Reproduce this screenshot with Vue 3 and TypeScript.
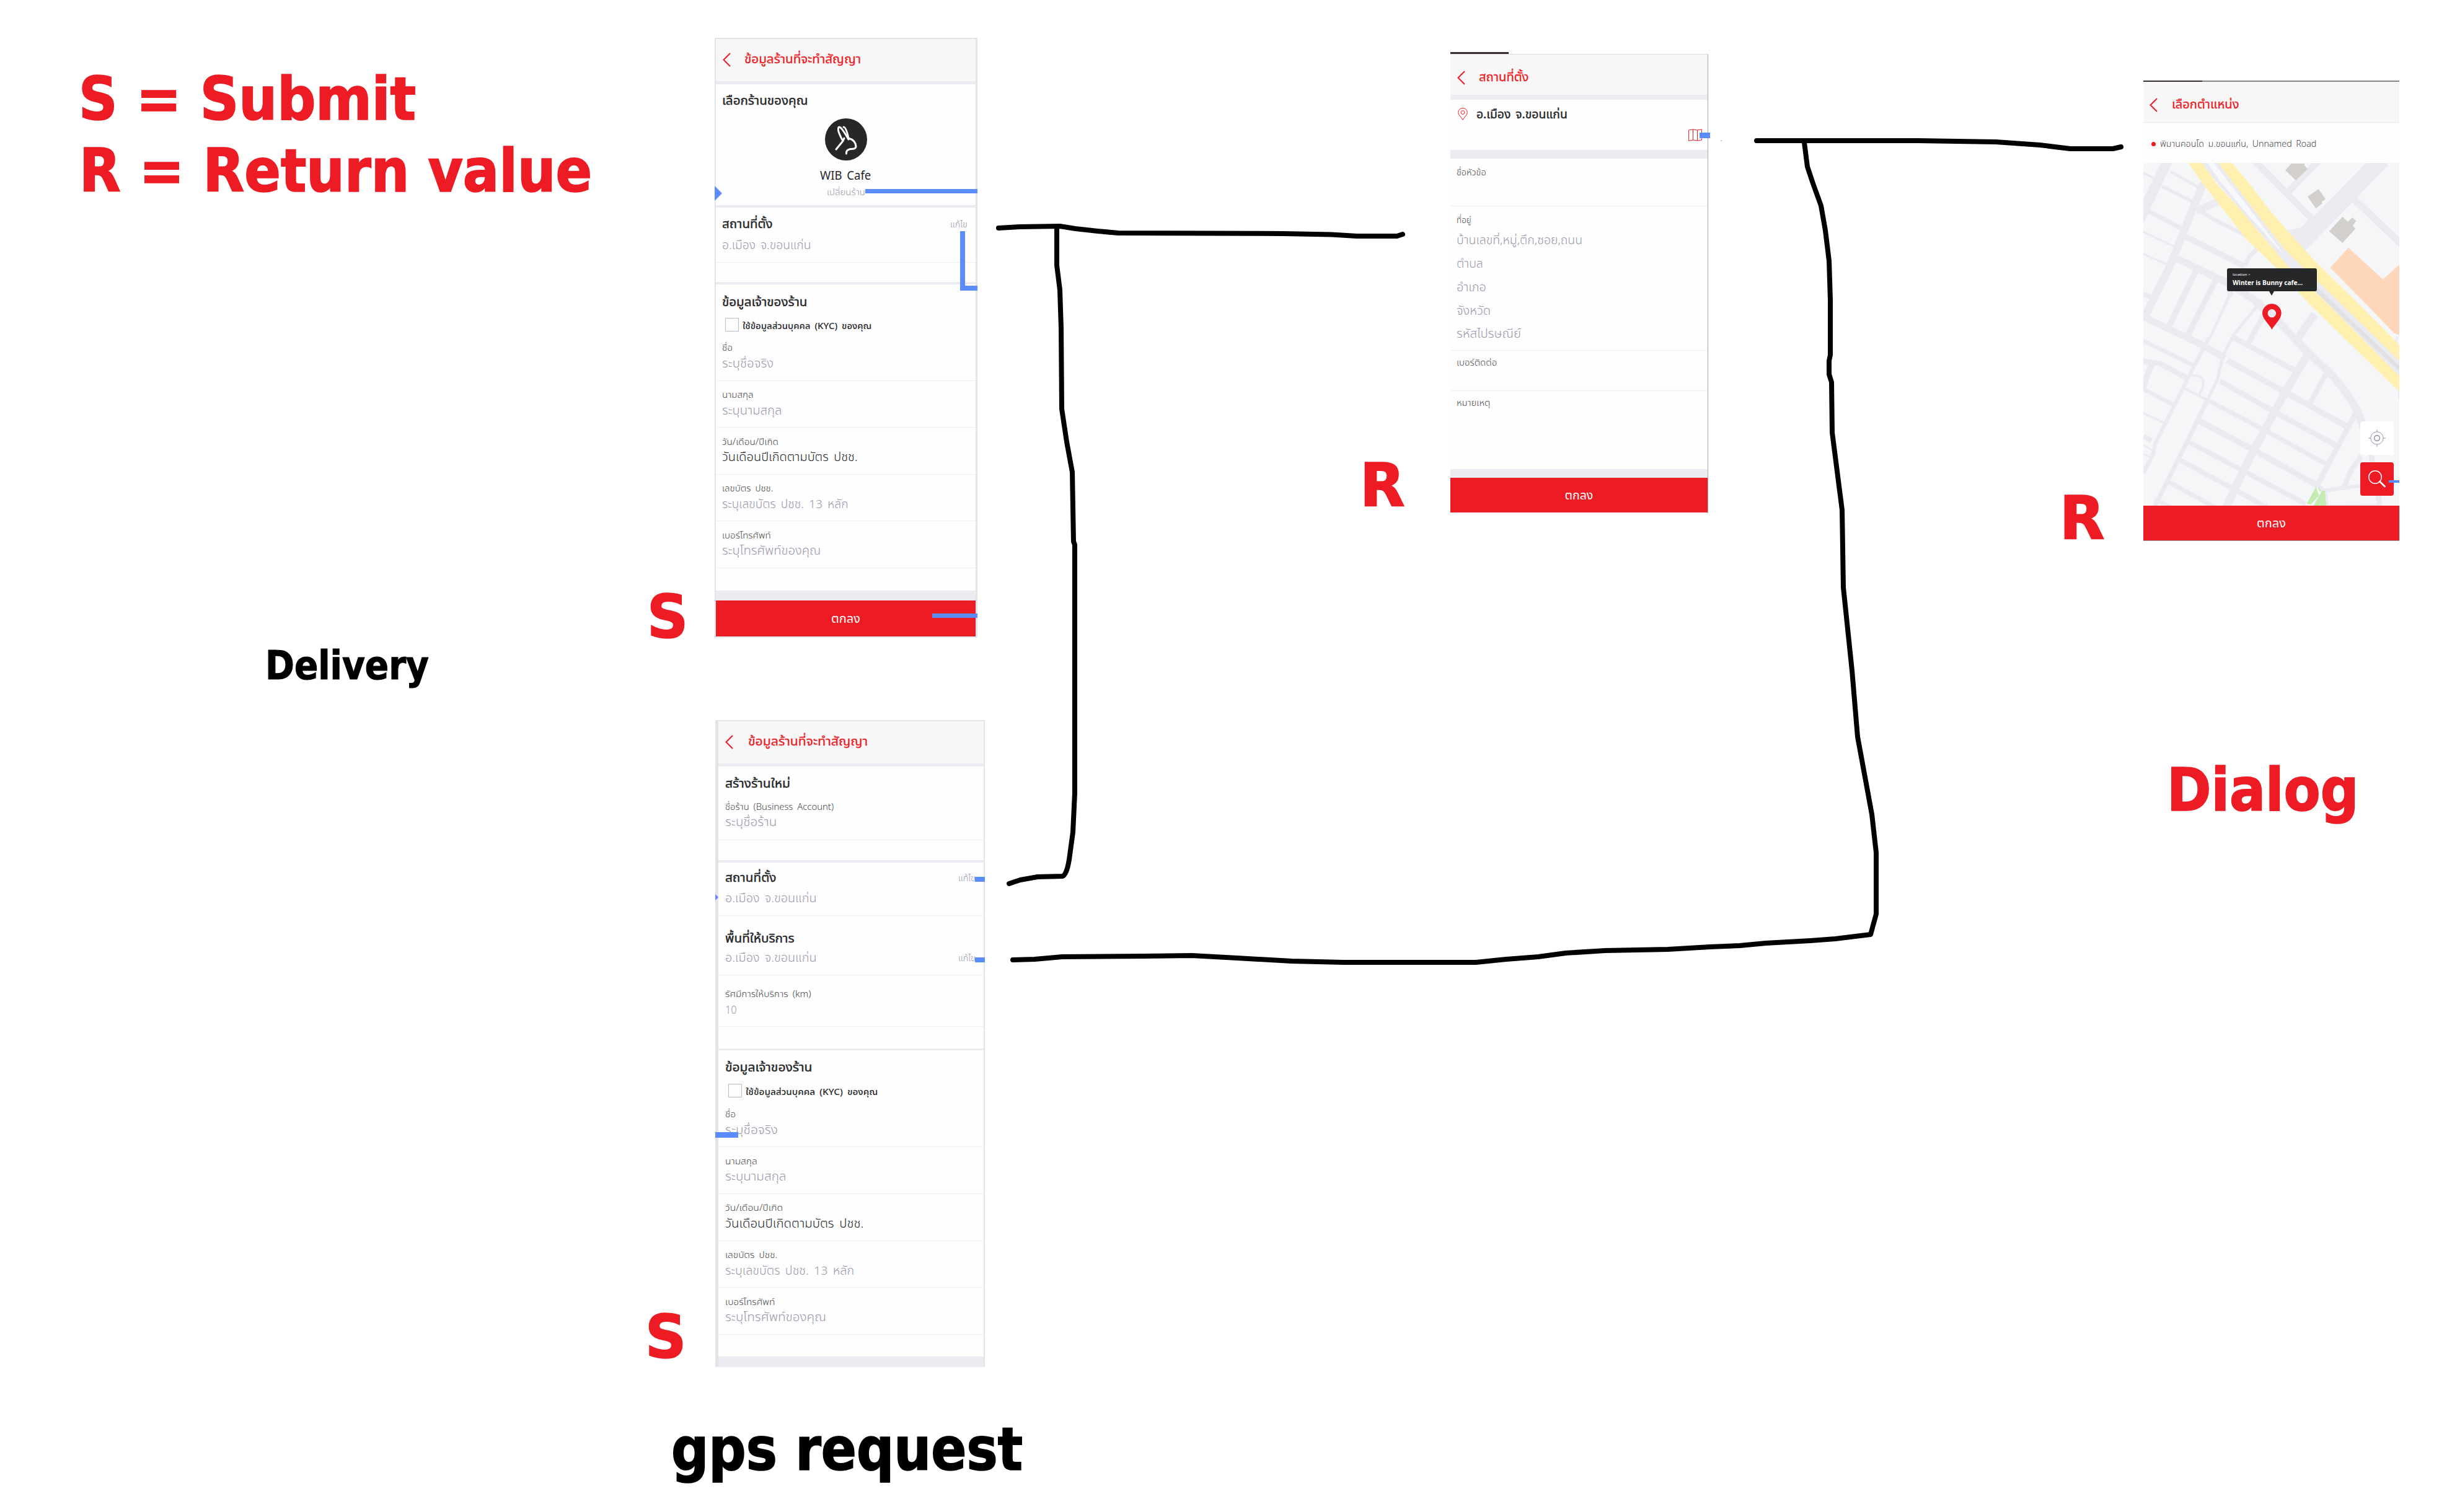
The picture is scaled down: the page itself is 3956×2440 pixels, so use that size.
<script setup lang="ts">
import type { Directive } from 'vue'

type Kind = 'title' | 'label' | 'value' | 'dark' | 'rule' | 'band' | 'check' | 'logo' | 'name' | 'sub' | 'place' | 'mapicon' | 'button'

interface Row {
  kind: Kind
  gap?: number
  text?: string
  w?: number
  h?: number
  edit?: boolean
}

interface Screen {
  id: string
  title: string
  titleWidth: number
  rows: Row[]
}

// Stretches a single line of text to the given width in pixels.
const vFit: Directive<HTMLElement, number | undefined> = {
  mounted(el, binding) {
    const width = el.offsetWidth
    if (binding.value && width) {
      el.style.transform = `scaleX(${binding.value / width})`
    }
  },
}

const ownerFields = (k: number): Row[] => {
  const fields: [string, number, string, number, boolean?][] = [
    ['ชื่อ', 17, 'ระบุชื่อจริง', 83],
    ['นามสกุล', 51, 'ระบุนามสกุล', 97],
    ['วัน/เดือน/ปีเกิด', 91, 'วันเดือนปีเกิดตามบัตร ปชช.', 219, true],
    ['เลขบัตร ปชช.', 82, 'ระบุเลขบัตร ปชช. 13 หลัก', 204],
    ['เบอร์โทรศัพท์', 79, 'ระบุโทรศัพท์ของคุณ', 159],
  ]
  return fields.flatMap(([label, lw, value, vw, dark]): Row[] => [
    { kind: 'label', gap: 9.4, text: label, w: lw * k },
    { kind: dark ? 'dark' : 'value', gap: 1.6, text: value, w: vw * k },
    { kind: 'rule', gap: 15.6 },
  ])
}

const screens: Screen[] = [
  {
    id: 'select-shop',
    title: 'ข้อมูลร้านที่จะทำสัญญา',
    titleWidth: 188,
    rows: [
      { kind: 'title', gap: 14, text: 'เลือกร้านของคุณ', w: 138 },
      { kind: 'logo', gap: 17 },
      { kind: 'name', gap: 12, text: 'WIB Cafe', w: 82 },
      { kind: 'sub', gap: 2, text: 'เปลี่ยนร้าน', w: 62 },
      { kind: 'band', gap: 10, h: 4 },
      { kind: 'title', gap: 14, text: 'สถานที่ตั้ง', w: 82, edit: true },
      { kind: 'value', gap: 9.6, text: 'อ.เมือง จ.ขอนแก่น', w: 143 },
      { kind: 'rule', gap: 16.4 },
      { kind: 'band', gap: 31, h: 4 },
      { kind: 'title', gap: 15.6, text: 'ข้อมูลเจ้าของร้าน', w: 138 },
      { kind: 'check', gap: 14.4, text: 'ใช้ข้อมูลส่วนบุคคล (KYC) ของคุณ', w: 208 },
      { kind: 'label', gap: 11.4, text: 'ชื่อ', w: 17 },
      ...ownerFields(1).slice(1),
      { kind: 'band', gap: 36, h: 16 },
      { kind: 'button', text: 'ตกลง', w: 47 },
    ],
  },
  {
    id: 'new-shop',
    title: 'ข้อมูลร้านที่จะทำสัญญา',
    titleWidth: 193,
    rows: [
      { kind: 'title', gap: 15, text: 'สร้างร้านใหม่', w: 105 },
      { kind: 'label', gap: 13, text: 'ชื่อร้าน (Business Account)', w: 175 },
      { kind: 'value', gap: 1, text: 'ระบุชื่อร้าน', w: 83 },
      { kind: 'rule', gap: 17 },
      { kind: 'band', gap: 32, h: 4 },
      { kind: 'title', gap: 12, text: 'สถานที่ตั้ง', w: 83, edit: true },
      { kind: 'value', gap: 8.6, text: 'อ.เมือง จ.ขอนแก่น', w: 147 },
      { kind: 'rule', gap: 16.4 },
      { kind: 'title', gap: 24, text: 'พื้นที่ให้บริการ', w: 112 },
      { kind: 'value', gap: 6.6, text: 'อ.เมือง จ.ขอนแก่น', w: 147, edit: true },
      { kind: 'rule', gap: 16.4 },
      { kind: 'label', gap: 17.4, text: 'รัศมีการให้บริการ (km)', w: 139 },
      { kind: 'value', gap: 1.6, text: '10', w: 19 },
      { kind: 'rule', gap: 15.4 },
      { kind: 'band', gap: 34.6, h: 3 },
      { kind: 'title', gap: 15, text: 'ข้อมูลเจ้าของร้าน', w: 141 },
      { kind: 'check', gap: 14.7, text: 'ใช้ข้อมูลส่วนบุคคล (KYC) ของคุณ', w: 213 },
      { kind: 'label', gap: 12.6, text: 'ชื่อ', w: 17 },
      ...ownerFields(1.022).slice(1),
      { kind: 'band', gap: 35, h: 17 },
    ],
  },
  {
    id: 'address',
    title: 'สถานที่ตั้ง',
    titleWidth: 81,
    rows: [
      { kind: 'place', gap: 11, text: 'อ.เมือง จ.ขอนแก่น', w: 147 },
      { kind: 'mapicon', gap: 12 },
      { kind: 'band', gap: 13, h: 14 },
      { kind: 'label', gap: 9.4, text: 'ชื่อหัวข้อ', w: 48 },
      { kind: 'rule', gap: 42.6 },
      { kind: 'label', gap: 9, text: 'ที่อยู่', w: 24 },
      { kind: 'value', gap: 8.6, text: 'บ้านเลขที่,หมู่,ตึก,ซอย,ถนน', w: 203 },
      { kind: 'value', gap: 14, text: 'ตำบล', w: 43 },
      { kind: 'value', gap: 14, text: 'อำเภอ', w: 48 },
      { kind: 'value', gap: 14, text: 'จังหวัด', w: 55 },
      { kind: 'value', gap: 13.7, text: 'รหัสไปรษณีย์', w: 104 },
      { kind: 'rule', gap: 14.7 },
      { kind: 'label', gap: 6.4, text: 'เบอร์ติดต่อ', w: 65 },
      { kind: 'rule', gap: 33.6 },
      { kind: 'label', gap: 6.4, text: 'หมายเหตุ', w: 54 },
      { kind: 'band', gap: 96, h: 14 },
      { kind: 'button', text: 'ตกลง', w: 46 },
    ],
  },
]

const notes = [
  { id: 'n1', x: 127, y: 193, text: 'S = Submit', w: 544, size: 96, red: true },
  { id: 'n2', x: 128, y: 309, text: 'R = Return value', w: 827, size: 96, red: true },
  { id: 'n3', x: 1044, y: 1029, text: 'S', w: 66, size: 96, red: true },
  { id: 'n4', x: 1041, y: 2191, text: 'S', w: 66, size: 96, red: true },
  { id: 'n5', x: 2194, y: 817, text: 'R', w: 73, size: 96, red: true },
  { id: 'n6', x: 3323, y: 870, text: 'R', w: 73, size: 96, red: true },
  { id: 'n7', x: 3496, y: 1308, text: 'Dialog', w: 309, size: 96, red: true },
  { id: 'n8', x: 428, y: 1096, text: 'Delivery', w: 264, size: 64, red: false },
  { id: 'n9', x: 1083, y: 2372, text: 'gps request', w: 567, size: 96, red: false },
]

// Streets of the map: [stroke width, path].
const roads: [number, string][] = [
  [50, 'M170 450L30 745'],
  [38, 'M345 555L290 690L175 975L60 1205'],
  [10, 'M54 508L105 533'],
  [14, 'M185 500L325 580'],
  [15, 'M145 573L300 650'],
  [36, 'M310 690L430 640'],
  [18, 'M330 692L400 735L560 815'],
  [22, 'M80 692L235 775'],
  [10, 'M54 792L210 866'],
  [10, 'M54 900L180 955'],
  [28, 'M250 812L545 960'],
  [34, 'M205 915L460 1040L620 1140'],
  [20, 'M610 872C570 900 560 920 545 960'],
  [22, 'M50 1092L95 1112'],
  [28, 'M312 975L180 1245'],
  [28, 'M402 1030L268 1295'],
  [12, 'M485 1070L375 1310'],
  [26, 'M480 1060L472 1105'],
  [15, 'M606 1150L488 1295L438 1395L412 1510L365 1605'],
  [32, 'M54 1203L350 1345L450 1405'],
  [20, 'M54 1320L292 1437'],
  [26, 'M54 1418L135 1430L265 1500'],
  [28, 'M85 1420L92 1440L50 1550'],
  [20, 'M54 1553L200 1630'],
  [10, 'M54 1670L150 1715'],
  [24, 'M54 1783L94 1802'],
  [8, 'M54 1825L105 1855M54 1868L85 1883'],
  [19, 'M372 1305L350 1345L265 1510L190 1660L110 1820L105 1860L54 1960'],
  [12, 'M275 1492C350 1475 360 1520 325 1580'],
  [12, 'M255 1550L370 1610'],
  [26, 'M485 1302L790 1465'],
  [28, 'M460 1415L740 1568L1040 1735'],
  [26, 'M425 1515L700 1670L985 1825'],
  [22, 'M375 1612L640 1752L935 1915'],
  [28, 'M320 1705L590 1850L900 2022'],
  [24, 'M270 1808L530 1945L840 2110'],
  [24, 'M222 1892L490 2037L650 2125'],
  [22, 'M170 2000L400 2125'],
  [22, 'M110 2085L180 2125'],
  [38, 'M850 1385L740 1570L640 1755L560 1905L455 2125'],
  [22, 'M365 1605L270 1800L105 2130'],
  [38, 'M600 1130L720 1240L850 1375L945 1465C1030 1550 1090 1640 1120 1740'],
  [26, 'M1120 1740L1155 1860L1200 2125'],
  [26, 'M1085 1665L895 2020'],
  [26, 'M640 1190L560 1335'],
  [38, 'M885 1190L800 1310'],
  [24, 'M945 1465L860 1625'],
  [24, 'M1110 1880C1060 1930 1045 1980 1022 2040'],
  [18, 'M895 2020L930 2045L1130 2018'],
  [8, 'M940 2050L945 2118L1190 2114'],
  [10, 'M1285 1300L1275 1325M1290 1565L1293 1600'],
  [32, 'M595 450L870 730'],
  [32, 'M900 450L750 605'],
  [85, 'M1210 440L810 850'],
  [34, 'M1065 625L1300 850'],
]
</script>

<template>
  <main class="board">
    <p
      v-for="n in notes"
      :key="n.id"
      class="note"
      :class="{ red: n.red }"
      :style="{ left: n.x + 'px', top: n.y + 'px', fontSize: n.size + 'px' }"
    >
      <span v-fit="n.w" class="t">{{ n.text }}</span>
    </p>

    <section v-for="s in screens" :key="s.id" class="screen" :class="s.id">
      <header class="bar">
        <svg class="back" viewBox="0 0 13 23"><path d="M12 1L1.5 11.5L12 22" /></svg>
        <span v-fit="s.titleWidth" class="t">{{ s.title }}</span>
      </header>
      <div
        v-for="(r, i) in s.rows"
        :key="i"
        class="row"
        :class="r.kind"
        :style="{ marginTop: (r.gap ?? 0) + 'px', height: r.h ? r.h + 'px' : undefined }"
      >
        <svg v-if="r.kind === 'logo'" viewBox="0 0 68 68">
          <circle cx="34" cy="34" r="34" fill="#262729" />
          <path
            d="M18 50L29 36.500Q19 19 22 14.500Q25 11 38 34M29 36.500L31 32M30 14Q34 14 38 32Q49 35 50 45Q50 50 41 49.500Q33.500 51 34.500 57"
            fill="none"
            stroke="#fff"
            stroke-width="3"
            stroke-linecap="round"
            stroke-linejoin="round"
          />
        </svg>
        <svg v-else-if="r.kind === 'mapicon'" viewBox="0 0 22 20">
          <path d="M.6 2L7.500.8L14.500 2L21.400.8V18L14.500 19L7.500 18L.6 19.300ZM7.500.8V18M14.500 2V19" />
        </svg>
        <template v-else>
          <svg v-if="r.kind === 'place'" class="pin" viewBox="0 0 16 20">
            <path d="M8 19.300C6 15.500.7 11.500.7 7.500a7.300 7 0 0 1 14.600 0C15.300 11.500 10 15.500 8 19.300Z" />
            <circle cx="8" cy="7.500" r="2.900" />
          </svg>
          <i v-if="r.kind === 'check'" class="box"></i>
          <span v-if="r.text" v-fit="r.w" class="t">{{ r.text }}</span>
          <span v-if="r.edit" class="edit"><span v-fit="28" class="t">แก้ไข</span></span>
        </template>
      </div>
      <template v-if="s.id === 'select-shop'">
        <i class="mark a1"></i><i class="mark a2"></i><i class="mark a3"></i><i class="mark a4"></i><i class="tip"></i>
      </template>
      <template v-else-if="s.id === 'new-shop'">
        <i class="mark b1"></i><i class="mark b2"></i><i class="mark b3"></i><i class="tip"></i>
      </template>
      <template v-else>
        <i class="mark c1"></i><i class="progress"></i>
      </template>
    </section>

    <section class="screen picker">
      <header class="bar">
        <svg class="back" viewBox="0 0 13 23"><path d="M12 1L1.5 11.5L12 22" /></svg>
        <span v-fit="109" class="t">เลือกตำแหน่ง</span>
      </header>
      <div class="addr">
        <i class="dot"></i>
        <span v-fit="252" class="t">พิมานคอนโด ม.ขอนแก่น, Unnamed Road</span>
      </div>
      <div class="map">
        <svg class="streets" viewBox="54 459 1239 1659" preserveAspectRatio="none">
          <rect x="54" y="459" width="1239" height="1659" fill="#f4f6f8" />
          <g fill="none" stroke="#ebeaf1" stroke-linejoin="round">
            <path v-for="([w, d], i) in roads" :key="i" :d="d" :stroke-width="w" />
          </g>
          <path fill="#ebeaf1" d="M750 787L815 770Q850 750 860 700L930 760L830 890Z" />
          <path fill="#ebeaf1" d="M330 459H430L750 880L1010 1130L1293 1410V1500L945 1140L765 970Z" />
          <path fill="#f7f8fa" d="M365 459H395L560 670L742 912L560 710L420 540Z" />
          <path fill="none" stroke="#e1e1e3" stroke-width="20" d="M885 1065L1293 1455" />
          <path fill="#fff0b0" d="M272 459L350 570L465 715L545 820L700 970L870 1155L1293 1565V1490L945 1140L765 970L640 825L520 680L410 560L338 459Z" />
          <path fill="#fff0b0" d="M418 459L500 570L600 700L740 880L830 970L1010 1140L1293 1417V1340L1095 1140L890 940L750 785L660 680L560 550L483 459Z" />
          <path fill="#d3cfcc" d="M770 462H835L833 470L849 488L792 543L741 494ZM902 586L936 634L917 647L921 655L889 679L849 622ZM1018 720L1045 744L1066 723L1084 740L1067 762L1080 777L1018 846L953 790Z" />
          <path fill="#fed6b9" d="M1046 869L1214 1022L1293 951V1293L1265 1280L1130 1140L959 966Z" />
          <path fill="#c3ebb2" d="M890 2027L898 2055L905 2068L865 2112L845 2108ZM899 2027L914 2044L908 2052ZM920 2044L933 2047L940 2118H878Z" />
          <path fill="#ed1c24" fill-rule="evenodd" d="M676 1266C665 1240 630 1215 630 1186a46 45 0 0 1 92 0C722 1215 690 1240 676 1266ZM676 1167a20 20 0 1 0 .1 0Z" />
        </svg>
        <div class="bubble">
          <span class="small"><span v-fit="28" class="t">location &gt;</span></span>
          <span class="big"><span v-fit="113" class="t">Winter is Bunny cafe...</span></span>
        </div>
        <div class="tool locate">
          <svg viewBox="0 0 28 28"><circle cx="14" cy="14" r="10.200" /><circle cx="14" cy="14" r="4.400" stroke-width="1.600" /><path d="M14 0V4M14 24V28M0 14H4M24 14H28" /></svg>
        </div>
        <div class="tool search">
          <svg viewBox="0 0 28 28"><circle cx="11" cy="11" r="10.200" /><path d="M18.500 18L26.500 26" stroke-width="2.600" stroke-linecap="round" /></svg>
        </div>
      </div>
      <div class="row button"><span v-fit="47" class="t">ตกลง</span></div>
      <i class="mark d1"></i><i class="progress"></i>
    </section>

    <svg class="ink" viewBox="0 0 3956 2440">
      <path d="M1611 368L1645 366L1710 365L1735 369L1771 373L1804 376L2070 377L2148 378.500L2189 381L2254 381L2263 378" />
      <path d="M1705 367V428L1710 468L1712 530L1713 660L1721 713L1730 762L1732 874L1734 879V1280L1731 1343L1725 1387Q1721 1412 1714 1414L1674 1415L1646 1420L1628 1426" />
      <path d="M1634 1549L1669 1548L1714 1544L1843 1543L1923 1542L1996 1546L2084 1551L2168 1553H2381L2430 1548L2482 1544L2526 1538L2590 1534L2691 1532L2759 1528L2807 1526L2849 1522L2921 1518L2961 1515L3018 1508L3027 1475V1376L3020 1314L2997 1189L2988 1082L2974 948L2972 823L2956 698L2955 617L2951 604V582L2953 573V484L2951 421L2945 372L2938 332L2925 296L2916 269L2911 230" />
      <path d="M2834 227H3095L3220 229L3291 234L3340 240H3409L3422 237" />
      <circle cx="2777" cy="227" r=".8" />
    </svg>
  </main>
</template>

<style>
body {
  margin: 0;
  background: #fff;
}
</style>

<style scoped>
.board {
  position: relative;
  width: 3956px;
  height: 2440px;
  overflow: hidden;
  background: #fff;
  font-family: "Noto Sans", "Noto Sans Thai", "Prompt", "Kanit", "Loma", sans-serif;
}
.t {
  display: inline-block;
  white-space: pre;
  transform-origin: 0 50%;
}
.note {
  position: absolute;
  margin: 0;
  line-height: 0;
  height: 0;
  font-family: "DejaVu Sans Condensed", "DejaVu Sans", sans-serif;
  font-stretch: condensed;
  font-weight: 700;
  color: #000;
  translate: 0 -0.346em;
  -webkit-text-stroke: 0.018em currentColor;
}
.red {
  color: #ed1c24;
}
.screen {
  position: absolute;
  box-sizing: border-box;
  background: #fefefe;
  color: #262729;
  word-spacing: 3px;
}
.select-shop {
  left: 1153px;
  top: 61px;
  width: 424px;
  height: 968px;
  border: 2px solid #e4e4e4;
  border-right-width: 3px;
  --left: 10px;
}
.new-shop {
  left: 1154px;
  top: 1162px;
  width: 435px;
  height: 1044px;
  border: solid #e4e4e4;
  border-width: 2px 2px 0 5px;
  --left: 11px;
}
.address {
  left: 2340px;
  top: 87px;
  width: 416px;
  height: 741px;
  border-top: 1px solid #ddd;
  border-right: 1px solid #aaa;
  --left: 10px;
}
.picker {
  left: 3458px;
  top: 130px;
  width: 413px;
  height: 743px;
  border-top: 2px solid #858585;
  border-bottom: 1px solid #999;
}
.bar {
  box-sizing: border-box;
  height: 73px;
  display: flex;
  align-items: center;
  padding: 0 0 4px 11px;
  background: #f7f7f7;
  border-bottom: 5px solid #ebebf1;
  color: #ed1c24;
  font-size: 20px;
  font-weight: 400;
  line-height: 24px;
  -webkit-text-stroke: 0.35px currentColor;
}
.back {
  width: 13px;
  height: 23px;
  margin: 3px 22px 0 0;
  fill: none;
  stroke: #ed1c24;
  stroke-width: 2;
}
.new-shop .back {
  margin-right: 24px;
}
.address .bar {
  border-bottom-width: 8px;
  padding: 6px 0 0 11px;
}
.picker .bar {
  height: 66px;
  border-bottom: 1px solid #e8e8e8;
  padding: 7px 0 0 10px;
}
.picker .back {
  margin-right: 23px;
}
.row {
  box-sizing: border-box;
  display: flex;
  height: 24px;
  padding-left: var(--left);
  line-height: 24px;
}
.title,
.place {
  font-size: 20px;
  font-weight: 400;
}
.title > .t,
.place > .t {
  -webkit-text-stroke: 0.45px currentColor;
}
.value,
.dark {
  font-size: 19px;
  font-weight: 300;
}
.value {
  color: #9a98ab;
}
.label {
  font-size: 14.5px;
  font-weight: 300;
  color: #444548;
}
.rule {
  height: 1px;
  background: #efeff1;
}
.band {
  background: #ebebf1;
}
.logo {
  height: 68px;
  justify-content: center;
  padding: 0;
}
.logo svg {
  width: 68px;
}
.name,
.sub {
  justify-content: center;
  padding: 0;
}
.name .t,
.sub .t,
.button .t {
  transform-origin: 50% 50%;
}
.name {
  font-size: 19px;
}
.sub,
.edit {
  font-size: 14.5px;
  font-weight: 300;
  color: #9a98ab;
}
.edit {
  width: 28px;
  margin-left: auto;
  margin-right: 13px;
}
.check {
  font-size: 14.5px;
  font-weight: 500;
}
.box {
  box-sizing: border-box;
  width: 22px;
  height: 22px;
  margin: 0 6px 0 5px;
  border: 1px solid #bdbbc8;
}
.place {
  padding-left: 12px;
}
.pin {
  width: 16px;
  height: 20px;
  margin: 2px 14px 0 0;
}
.pin,
.mapicon svg {
  fill: none;
  stroke: #ed1c24;
  stroke-width: 1;
}
.mapicon {
  height: 21px;
  justify-content: flex-end;
  padding-right: 9px;
}
.mapicon svg {
  width: 22px;
  height: 20px;
}
.button {
  height: 57px;
  padding: 0;
  align-items: center;
  justify-content: center;
  background: #ed1c24;
  color: #fff;
  font-size: 20px;
}
.select-shop .button {
  height: 58px;
}
.address .button,
.picker .button {
  height: 56px;
}
.mark {
  position: absolute;
  background: #5a8cff;
}
.a1 { left: 241px; top: 242px; width: 181px; height: 7px; }
.a2 { left: 394px; top: 310px; width: 8px; height: 96px; }
.a3 { left: 394px; top: 398px; width: 28px; height: 8px; }
.a4 { left: 349px; top: 927px; width: 73px; height: 7px; }
.b1 { left: 414px; top: 251px; width: 16px; height: 8px; }
.b2 { left: 414px; top: 381px; width: 16px; height: 8px; }
.b3 { left: -5px; top: 663px; width: 37px; height: 9px; }
.c1 { left: 402px; top: 126px; width: 17px; height: 9px; }
.d1 { left: 396px; top: 643px; width: 17px; height: 4px; }
.tip {
  position: absolute;
  left: -2px;
  top: 237px;
  border: solid transparent;
  border-width: 12.5px 0 12.5px 12.5px;
  border-left-color: #5a8cff;
}
.new-shop .tip {
  left: -5px;
  top: 279px;
  border-width: 5px 0 5px 5px;
  border-left-color: #5a8cff;
}
.progress {
  position: absolute;
  left: 0;
  top: -4px;
  width: 94px;
  height: 3px;
  background: #372c35;
}
.picker .progress {
  top: -2px;
  width: 95px;
  height: 2px;
}
.addr {
  height: 65px;
  display: flex;
  align-items: center;
  padding-left: 13px;
  font-size: 14.5px;
  font-weight: 300;
  line-height: 24px;
  color: #444548;
}
.dot {
  width: 7px;
  height: 7px;
  margin: 3px 7px 0 0;
  border-radius: 50%;
  background: #ed1c24;
}
.map {
  position: relative;
  height: 553px;
}
.streets {
  display: block;
  width: 413px;
  height: 553px;
}
.bubble {
  position: absolute;
  left: 135px;
  top: 170px;
  box-sizing: border-box;
  width: 145px;
  height: 37px;
  padding: 5px 9px;
  border-radius: 3px;
  background: #262729;
  color: #fff;
  word-spacing: 0;
  display: flex;
  flex-direction: column;
}
.bubble::after {
  content: "";
  position: absolute;
  left: 68px;
  top: 37px;
  border: solid transparent;
  border-width: 7px 4px 0;
  border-top-color: #262729;
}
.small {
  font-size: 6px;
  line-height: 10px;
}
.big {
  font-family: "Open Sans", sans-serif;
  font-size: 10.5px;
  font-weight: 700;
  line-height: 17px;
}
.tool {
  position: absolute;
  right: 9px;
  width: 54px;
  height: 54px;
  border-radius: 4px;
  display: flex;
  align-items: center;
  justify-content: center;
  fill: none;
}
.tool svg {
  width: 28px;
  height: 28px;
}
.locate {
  top: 417px;
  background: #fff;
  stroke: #9a98ab;
  stroke-width: 1;
}
.search {
  top: 483px;
  background: #ed1c24;
  stroke: #fff;
  stroke-width: 1.5;
}
.ink {
  position: absolute;
  left: 0;
  top: 0;
  width: 3956px;
  height: 2440px;
  pointer-events: none;
  fill: none;
  stroke: #000;
  stroke-width: 8;
  stroke-linecap: round;
  stroke-linejoin: round;
}
.ink circle {
  stroke-width: 0;
  fill: #888;
}
</style>
